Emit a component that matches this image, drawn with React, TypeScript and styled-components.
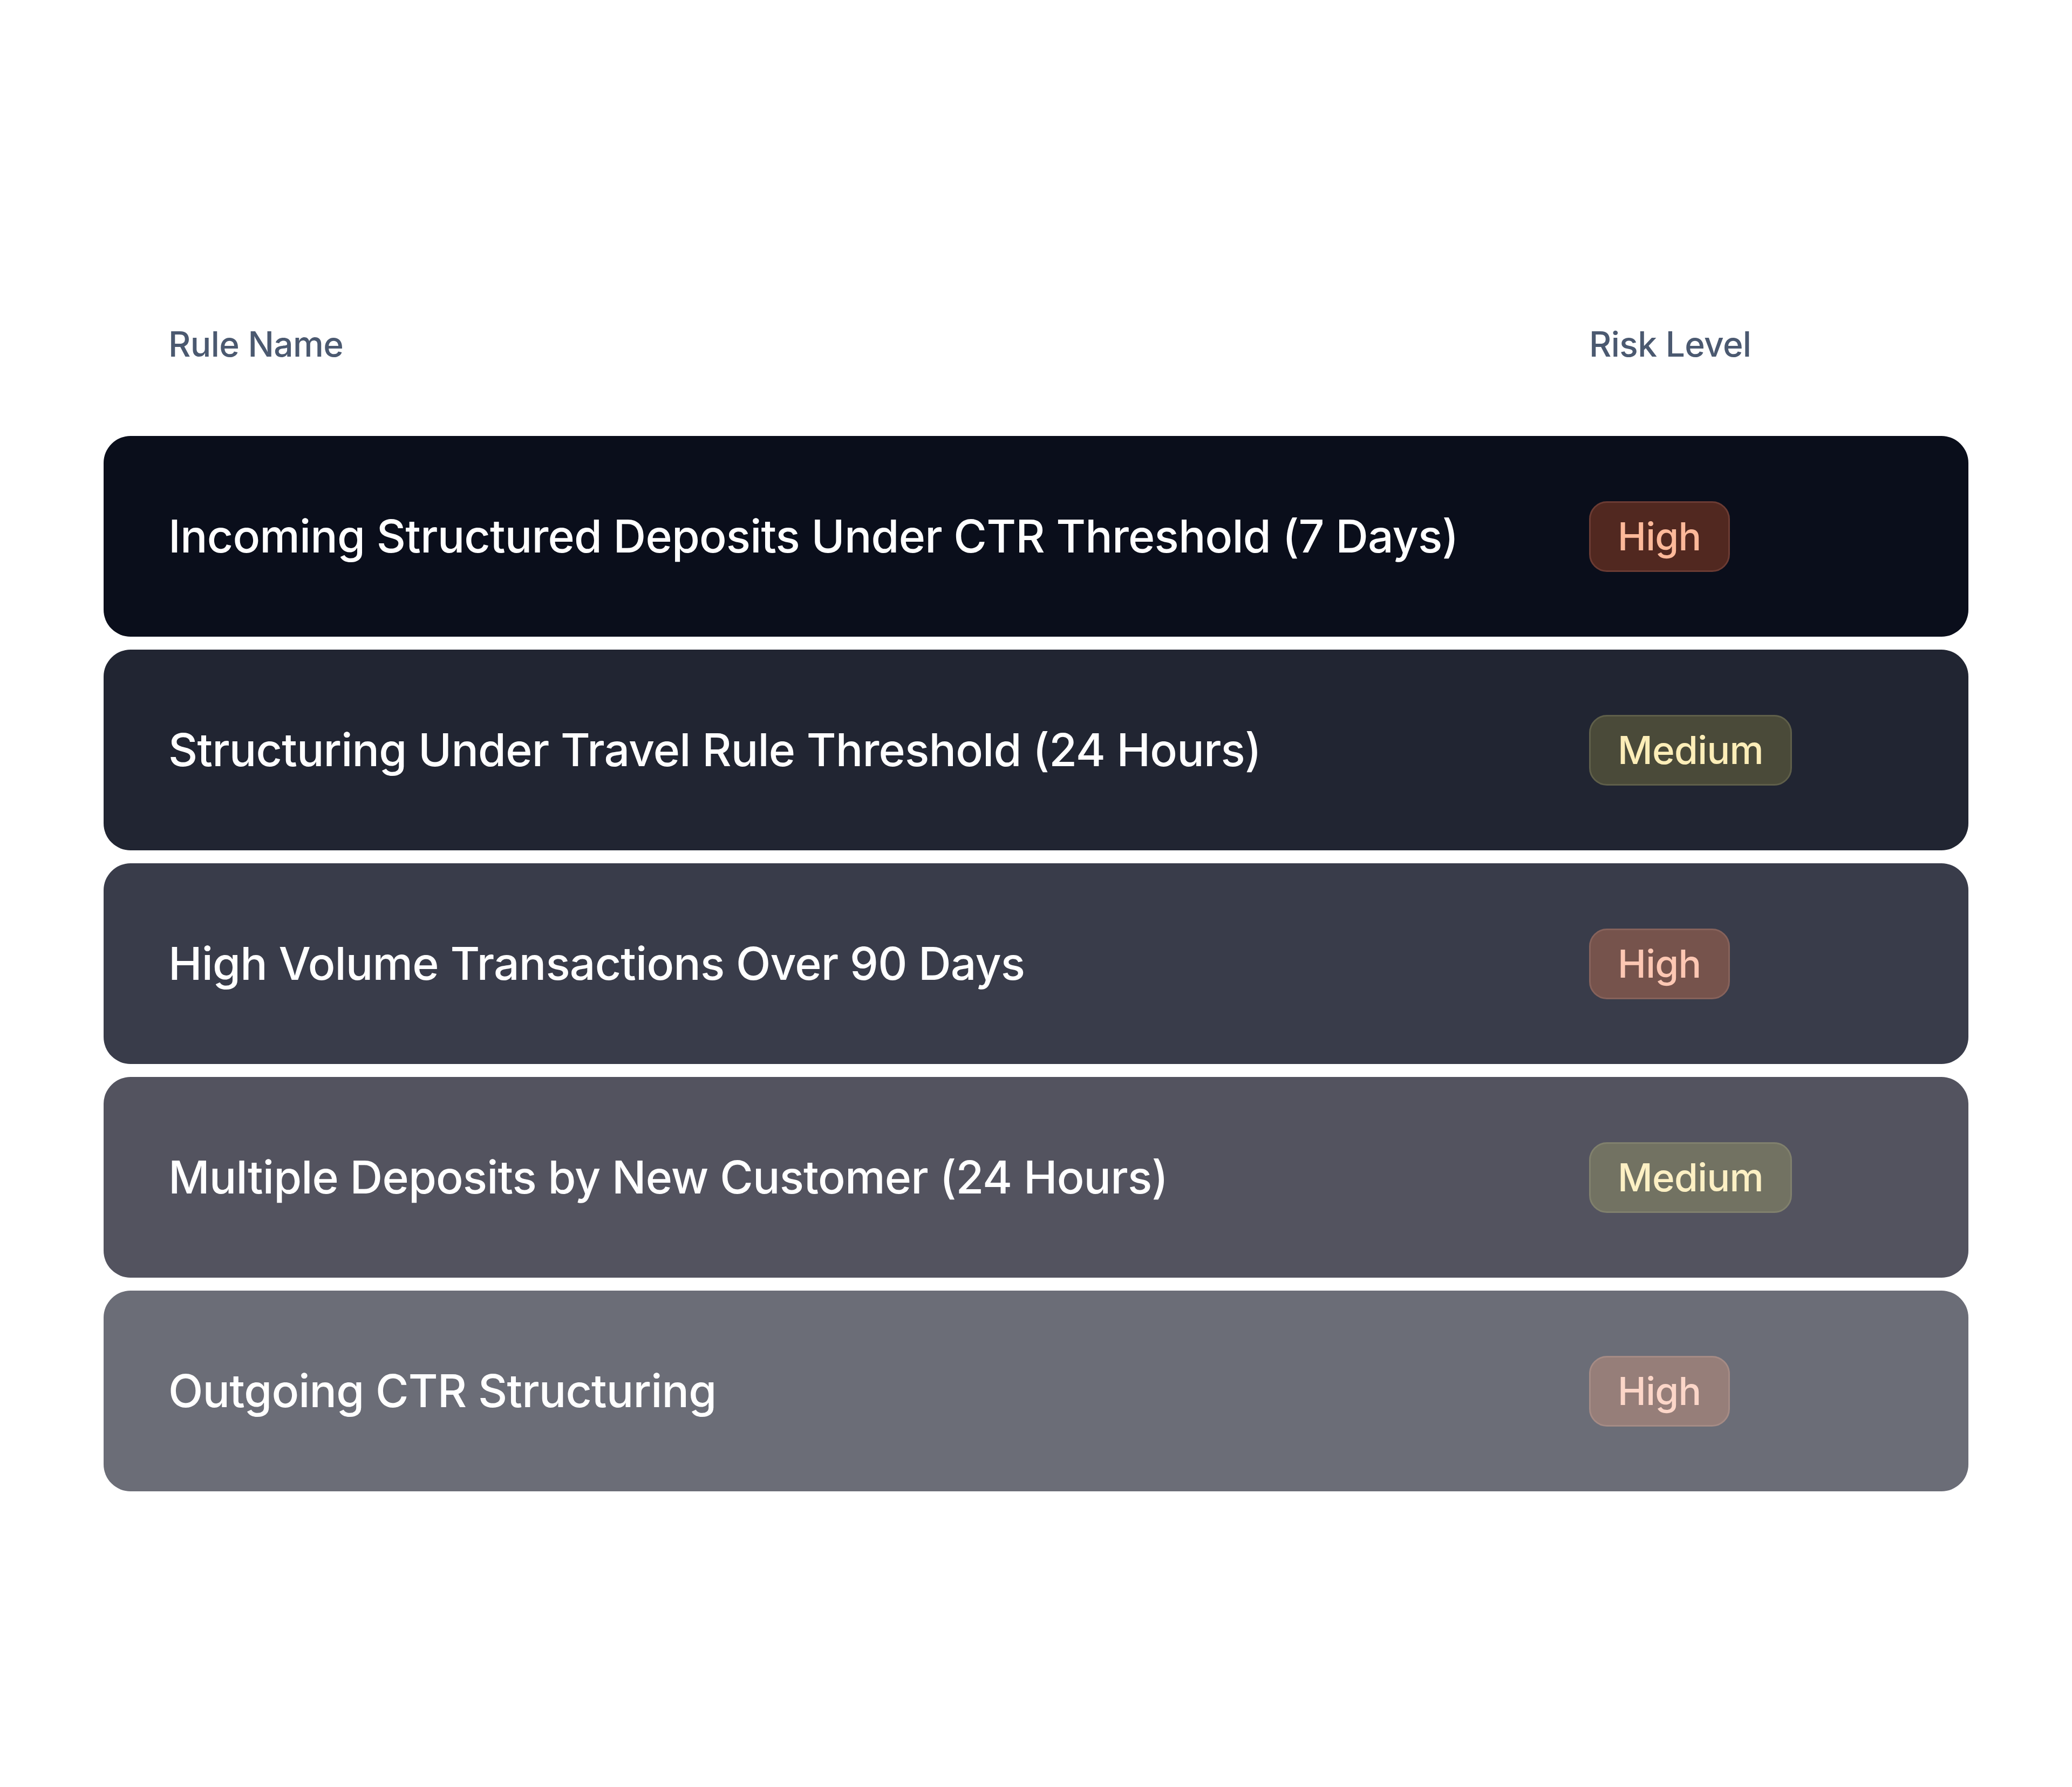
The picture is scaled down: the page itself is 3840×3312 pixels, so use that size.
import React from "react";
import styled, { createGlobalStyle } from "styled-components";

const Global = createGlobalStyle`
  html, body { margin: 0; padding: 0; background: #ffffff; }
  body { font-family: Inter, "Noto Sans", sans-serif; }
`;

const Page = styled.div`
  width: 3840px;
  min-height: 3312px;
  padding-top: 588px;
  box-sizing: border-box;
  background: #ffffff;
`;

const Table = styled.div`
  width: 3456px;
  margin: 0 auto;
  display: flex;
  flex-direction: column;
`;

const HeaderRow = styled.div`
  display: grid;
  grid-template-columns: 1fr 583px;
  padding: 0 120px;
  height: 99px;
  align-items: center;
  margin-bottom: 121px;
`;

const HeaderCell = styled.div`
  font-size: 64px;
  font-weight: 500;
  letter-spacing: -0.64px;
  color: #4b5970;
  line-height: 1.5;
`;

const List = styled.div`
  display: flex;
  flex-direction: column;
  gap: 24px;
`;

const Row = styled.div<{ $bg: string }>`
  display: grid;
  grid-template-columns: 1fr 583px;
  align-items: center;
  height: 372px;
  padding: 0 120px;
  border-radius: 50px;
  background: ${(p) => p.$bg};
`;

const RuleName = styled.div`
  font-size: 84px;
  font-weight: 500;
  letter-spacing: -0.84px;
  color: #ffffff;
  line-height: 1.5;
`;

const Badge = styled.span<{ $bg: string; $border: string; $fg: string }>`
  justify-self: start;
  display: inline-flex;
  align-items: center;
  height: 131px;
  box-sizing: border-box;
  padding: 0 50px;
  border-radius: 33px;
  border: 3px solid ${(p) => p.$border};
  background: ${(p) => p.$bg};
  color: ${(p) => p.$fg};
  font-size: 71px;
  font-weight: 500;
  letter-spacing: -0.71px;
  line-height: 1;
`;

type Risk = "High" | "Medium";

const rows: {
  name: string;
  risk: Risk;
  bg: string;
  badge: { bg: string; border: string; fg: string };
}[] = [
  {
    name: "Incoming Structured Deposits Under CTR Threshold (7 Days)",
    risk: "High",
    bg: "#0a0e1b",
    badge: { bg: "#512820", border: "#6b3b33", fg: "#fdb99a" },
  },
  {
    name: "Structuring Under Travel Rule Threshold (24 Hours)",
    risk: "Medium",
    bg: "#212532",
    badge: { bg: "#4a4a39", border: "#5f5f4a", fg: "#fdeeb8" },
  },
  {
    name: "High Volume Transactions Over 90 Days",
    risk: "High",
    bg: "#393c4a",
    badge: { bg: "#76534c", border: "#86625b", fg: "#fdc7b3" },
  },
  {
    name: "Multiple Deposits by New Customer (24 Hours)",
    risk: "Medium",
    bg: "#53535f",
    badge: { bg: "#727262", border: "#80806d", fg: "#fdf0c4" },
  },
  {
    name: "Outgoing CTR Structuring",
    risk: "High",
    bg: "#6b6d77",
    badge: { bg: "#967e79", border: "#a58b85", fg: "#fcd6c8" },
  },
];

export default function App() {
  return (
    <>
      <Global />
      <Page>
        <Table>
          <HeaderRow>
            <HeaderCell>Rule Name</HeaderCell>
            <HeaderCell>Risk Level</HeaderCell>
          </HeaderRow>
          <List>
            {rows.map((r) => (
              <Row key={r.name} $bg={r.bg}>
                <RuleName>{r.name}</RuleName>
                <Badge $bg={r.badge.bg} $border={r.badge.border} $fg={r.badge.fg}>
                  {r.risk}
                </Badge>
              </Row>
            ))}
          </List>
        </Table>
      </Page>
    </>
  );
}
